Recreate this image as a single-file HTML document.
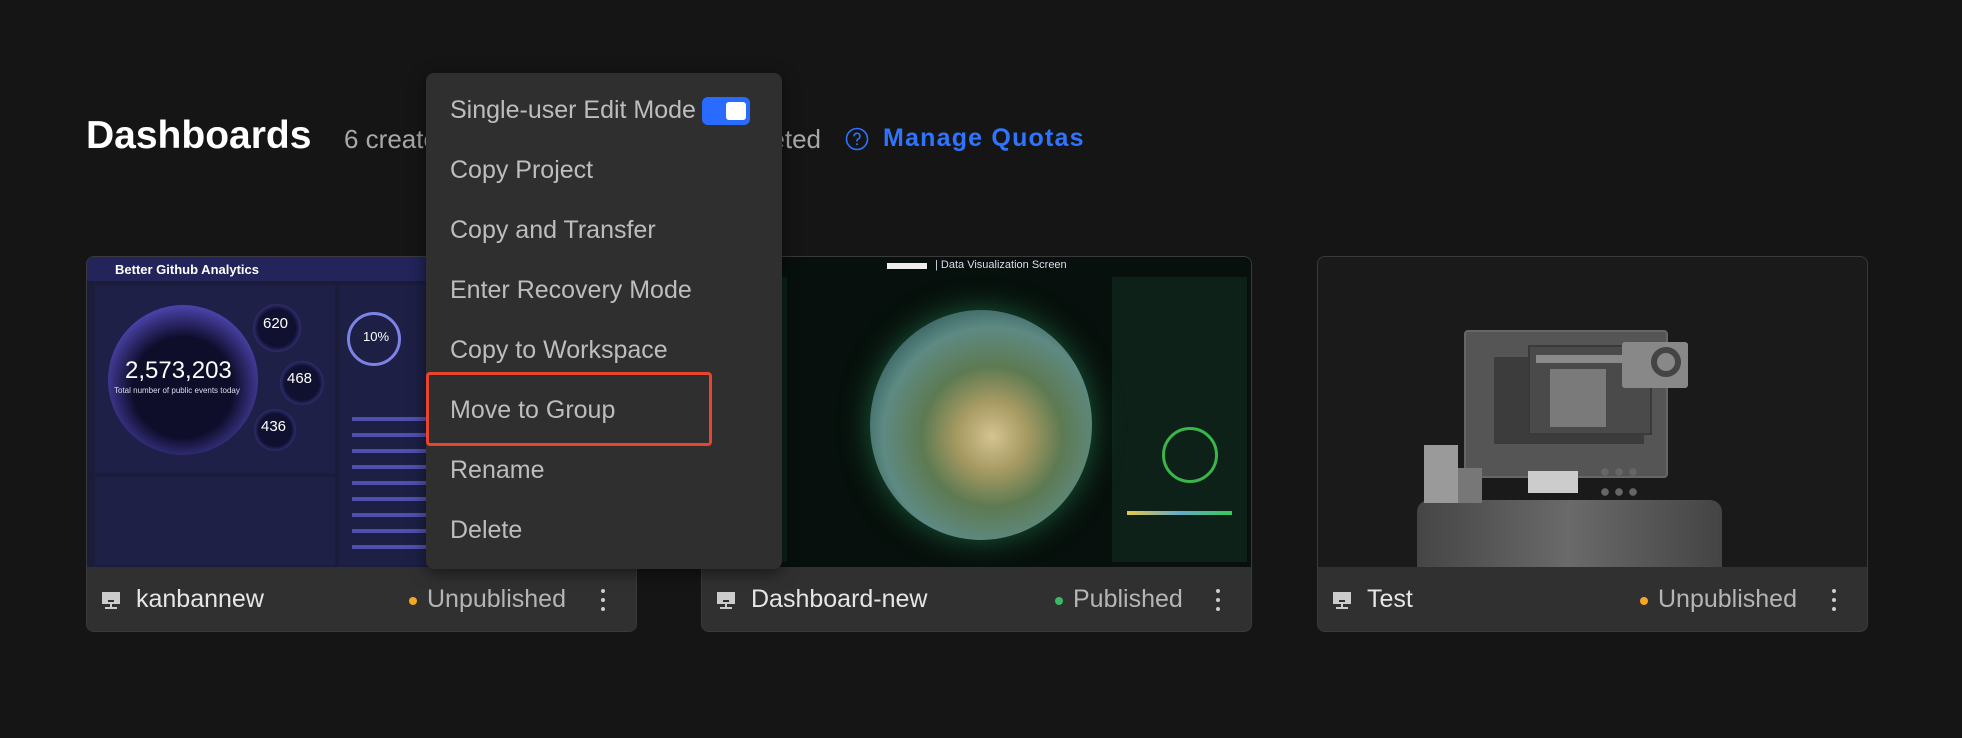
<!DOCTYPE html>
<html><head><meta charset="utf-8"><style>
*{box-sizing:border-box;margin:0;padding:0}
body{width:1962px;height:738px;background:#151515;font-family:"Liberation Sans",sans-serif;position:relative;overflow:hidden;color:#ddd}
.abs{position:absolute}
.card{position:absolute;top:256px;width:551px;height:376px;border-radius:8px;overflow:hidden;background:#303030;border:1px solid #3a3a3a}
.img{position:absolute;left:0;top:0;width:100%;height:310px;overflow:hidden}
.foot{position:absolute;left:0;top:310px;width:100%;height:66px;background:#303030}
.foot .ic{position:absolute;left:14px;top:24px;width:20px;height:20px}
.foot .nm{position:absolute;left:49px;top:18px;font-size:25px;color:#e6e6e6}
.foot .st{position:absolute;top:18px;font-size:25px;color:#b5b5b5}
.foot .dot{position:absolute;top:30px;width:8px;height:8px;border-radius:50%}
.foot .kb{position:absolute;top:22px;width:4px}
.foot .kb i{display:block;width:4px;height:4px;border-radius:2px;background:#ccc;margin-bottom:5px}
.menu{position:absolute;left:426px;top:73px;width:356px;height:496px;background:#2f2f2f;border-radius:8px;box-shadow:0 4px 16px rgba(0,0,0,.5)}
.mi{position:absolute;left:24px;font-size:25px;color:#bdbdbd}
</style></head><body>
<div class="abs" style="left:86px;top:114px;font-size:39px;font-weight:bold;color:#fff">Dashboards</div>
<div class="abs" style="left:344px;top:124px;font-size:26px;color:#a8a8a8">6 created</div>
<div class="abs" style="left:700px;top:124px;width:121px;text-align:right;font-size:26px;color:#a8a8a8">deleted</div>
<svg class="abs" style="left:845px;top:127px" width="24" height="24" viewBox="0 0 24 24"><circle cx="12" cy="12" r="10.5" fill="none" stroke="#2f74ff" stroke-width="1.6"/><path d="M9 9.3a3 3 0 1 1 4.2 2.7c-.8.4-1.2 1-1.2 1.9v.6" fill="none" stroke="#2f74ff" stroke-width="1.6"/><circle cx="12" cy="17.3" r="1" fill="#2f74ff"/></svg>
<div class="abs" style="left:883px;top:124px;font-size:25px;font-weight:bold;color:#2f74ff;letter-spacing:1.2px">Manage Quotas</div>

<!-- card1 -->
<div class="card" style="left:86px">
 <div class="img" style="background:#1b1c3a">
  <div class="abs" style="left:0;top:0;width:100%;height:24px;background:#22245a"></div>
  <div class="abs" style="left:28px;top:5px;font-size:13px;font-weight:bold;color:#fff">Better Github Analytics</div>
  <div class="abs" style="left:8px;top:28px;width:240px;height:188px;background:#1e2048"></div>
  <div class="abs" style="left:21px;top:48px;width:150px;height:150px;border-radius:50%;background:radial-gradient(circle at 50% 55%,#0e0d2a 45%,#5a4fc8 80%,#a59cff 100%)"></div>
  <div class="abs" style="left:38px;top:100px;font-size:24px;color:#fff">2,573,203</div>
  <div class="abs" style="left:27px;top:129px;font-size:8px;color:#dde">Total number of public events today</div>
  <div class="abs" style="left:166px;top:47px;width:48px;height:48px;border-radius:50%;background:radial-gradient(#101030 55%,#6f63e0)"></div>
  <div class="abs" style="left:176px;top:58px;font-size:15px;color:#fff">620</div>
  <div class="abs" style="left:193px;top:104px;width:44px;height:44px;border-radius:50%;background:radial-gradient(#101030 55%,#6f63e0)"></div>
  <div class="abs" style="left:200px;top:113px;font-size:15px;color:#fff">468</div>
  <div class="abs" style="left:167px;top:152px;width:42px;height:42px;border-radius:50%;background:radial-gradient(#101030 55%,#6f63e0)"></div>
  <div class="abs" style="left:174px;top:161px;font-size:15px;color:#fff">436</div>
  <div class="abs" style="left:8px;top:220px;width:240px;height:88px;background:#1f2046"></div>
  <div class="abs" style="left:252px;top:28px;width:300px;height:280px;background:#1d1f45"></div>
  <div class="abs" style="left:260px;top:55px;width:54px;height:54px;border-radius:50%;border:3px solid #7d83e6"></div>
  <div class="abs" style="left:276px;top:72px;font-size:13px;color:#fff">10%</div>
  <div class="abs" style="left:265px;top:150px;width:100px;height:150px;background:repeating-linear-gradient(#1d1f45 0 10px,#4f4fb0 10px 14px,#1d1f45 14px 16px)"></div>
 </div>
 <div class="foot">
  <svg class="ic" viewBox="0 0 20 20"><rect x="1" y="1" width="18" height="12" fill="#ccc"/><rect x="9" y="13" width="2" height="3" fill="#ccc"/><rect x="4" y="16" width="12" height="2" fill="#ccc"/><rect x="7" y="9" width="6" height="2" fill="#303030"/></svg>
  <div class="nm">kanbannew</div><div class="dot" style="left:322px;background:#f5a623"></div><div class="st" style="left:340px">Unpublished</div>
  <div class="kb" style="left:514px"><i></i><i></i><i></i></div>
 </div>
</div>

<!-- card2 -->
<div class="card" style="left:701px">
 <div class="img" style="background:#07100c">
  <div class="abs" style="left:185px;top:6px;width:40px;height:6px;background:#eee"></div>
  <div class="abs" style="left:233px;top:2px;font-size:11px;color:#dde">| Data Visualization Screen</div>
  <div class="abs" style="left:0;top:20px;width:85px;height:285px;background:#0c2018"></div>
  <div class="abs" style="left:410px;top:20px;width:135px;height:285px;background:#0d2119"></div>
  <div class="abs" style="left:168px;top:53px;width:222px;height:230px;border-radius:50%;background:radial-gradient(circle at 55% 55%,#d5c390 0%,#a69a62 20%,#5d7a52 40%,#5e8a83 62%,#2f5a5a 80%,#0c2a1f 100%);box-shadow:0 0 30px #1a5a3a"></div>
  <div class="abs" style="left:460px;top:170px;width:56px;height:56px;border-radius:50%;border:3px solid #3ab54a"></div>
  <div class="abs" style="left:425px;top:254px;width:105px;height:4px;background:linear-gradient(90deg,#e6c84a,#6ac,#3c5)"></div>
 </div>
 <div class="foot">
  <svg class="ic" viewBox="0 0 20 20"><rect x="1" y="1" width="18" height="12" fill="#ccc"/><rect x="9" y="13" width="2" height="3" fill="#ccc"/><rect x="4" y="16" width="12" height="2" fill="#ccc"/><rect x="7" y="9" width="6" height="2" fill="#303030"/></svg>
  <div class="nm">Dashboard-new</div><div class="dot" style="left:353px;background:#3cb964"></div><div class="st" style="left:371px">Published</div>
  <div class="kb" style="left:514px"><i></i><i></i><i></i></div>
 </div>
</div>

<!-- card3 -->
<div class="card" style="left:1317px">
 <div class="img" style="background:#1a1a1a">
  <div class="abs" style="left:146px;top:73px;width:204px;height:148px;background:#555;border-radius:4px;border:2px solid #666"></div>
  <div class="abs" style="left:176px;top:100px;width:150px;height:87px;background:#3c3c3c"></div>
  <div class="abs" style="left:210px;top:88px;width:124px;height:90px;background:#4a4a4a;border:2px solid #3a3a3a"></div>
  <div class="abs" style="left:218px;top:98px;width:110px;height:8px;background:#8a8a8a"></div>
  <div class="abs" style="left:232px;top:112px;width:56px;height:58px;background:#7a7a7a"></div>
  <div class="abs" style="left:304px;top:85px;width:66px;height:46px;background:#888;border-radius:3px"></div>
  <div class="abs" style="left:333px;top:90px;width:30px;height:30px;border-radius:50%;border:6px solid #444"></div>
  <div class="abs" style="left:210px;top:214px;width:50px;height:22px;background:#ccc"></div>
  <div class="abs" style="left:99px;top:243px;width:305px;height:67px;background:linear-gradient(90deg,#454545,#6a6a6a 50%,#444);border-radius:12px 12px 0 0"></div>
  <div class="abs" style="left:106px;top:188px;width:34px;height:58px;background:#9a9a9a"></div>
  <div class="abs" style="left:140px;top:211px;width:24px;height:35px;background:#777"></div>
  <div class="abs" style="left:280px;top:205px;width:42px;height:42px;background:radial-gradient(circle,#666 30%,transparent 32%) 0 0/14px 20px"></div>
 </div>
 <div class="foot">
  <svg class="ic" viewBox="0 0 20 20"><rect x="1" y="1" width="18" height="12" fill="#ccc"/><rect x="9" y="13" width="2" height="3" fill="#ccc"/><rect x="4" y="16" width="12" height="2" fill="#ccc"/><rect x="7" y="9" width="6" height="2" fill="#303030"/></svg>
  <div class="nm">Test</div><div class="dot" style="left:322px;background:#f5a623"></div><div class="st" style="left:340px">Unpublished</div>
  <div class="kb" style="left:514px"><i></i><i></i><i></i></div>
 </div>
</div>

<!-- menu -->
<div class="menu">
 <div class="mi" style="top:23px">Single-user Edit Mode</div>
 <div class="abs" style="left:276px;top:24px;width:48px;height:28px;background:#2a6bff;border-radius:6px"></div>
 <div class="abs" style="left:300px;top:29px;width:20px;height:18px;background:#fff;border-radius:3px"></div>
 <div class="mi" style="top:83px">Copy Project</div>
 <div class="mi" style="top:143px">Copy and Transfer</div>
 <div class="mi" style="top:203px">Enter Recovery Mode</div>
 <div class="mi" style="top:263px">Copy to Workspace</div>
 <div class="abs" style="left:0;top:299px;width:286px;height:74px;border:3px solid #e8452c;border-radius:4px"></div>
 <div class="mi" style="top:323px">Move to Group</div>
 <div class="mi" style="top:383px">Rename</div>
 <div class="mi" style="top:443px">Delete</div>
</div>
</body></html>
